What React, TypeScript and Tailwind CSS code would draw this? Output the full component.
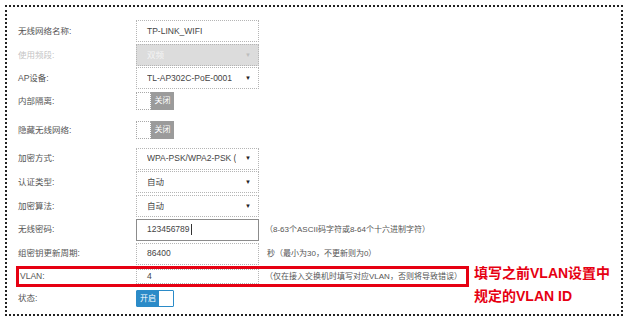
import React from 'react';

const labelCls = 'w-[118px] shrink-0 text-[8.5px] text-[#555]';
const boxCls =
  'w-[123px] h-[22px] shrink-0 border border-dotted border-[#b5b5b5] flex items-center pl-[10px] text-[8.5px] text-[#444]';
const hintCls = 'ml-[8px] text-[8px] text-[#555] whitespace-nowrap';

function Select({ value, disabled }: { value: string; disabled?: boolean }) {
  return (
    <div
      className={`${boxCls} justify-between pr-[7px] h-[21px] ${
        disabled ? 'bg-[#dcdcdc] text-[#f4f4f4]' : 'bg-white'
      }`}
    >
      <span className="truncate">{value}</span>
      <span className={`text-[6px] ${disabled ? 'text-[#bdbdbd]' : 'text-[#222]'}`}>▼</span>
    </div>
  );
}

function ToggleOff() {
  return (
    <div className="flex h-[18px] w-[38px]">
      <div className="w-[15px] h-full border border-dotted border-[#a8a8a8] bg-white" />
      <div className="flex-1 bg-[#9b9b9b] flex items-center justify-center text-[8px] text-white">
        关闭
      </div>
    </div>
  );
}

function ToggleOn() {
  return (
    <div className="flex h-[17px] w-[38px] border border-[#2b8bc8] rounded-[1px]">
      <div className="w-[22px] bg-[#2b8bc8] flex items-center justify-center text-[8px] text-white">
        开启
      </div>
      <div className="flex-1 bg-white" />
    </div>
  );
}

export default function App() {
  return (
    <div className="relative w-[632px] h-[321px] bg-white font-['Liberation_Sans','Noto_Sans_CJK_SC',sans-serif] overflow-hidden">
      <div className="ml-[5px] mt-[5px] w-[618px] h-[311px] border-2 border-dotted border-[#222] pt-[12px] pl-[11px]">
        {/* wireless name */}
        <div className="flex items-center h-[24px]">
          <span className={labelCls}>无线网络名称:</span>
          <div className={boxCls}>TP-LINK_WIFI</div>
        </div>
        <div className="flex items-center h-[24px]">
          <span className={`${labelCls} !text-[#c4c4c4]`}>使用频段:</span>
          <Select value="双频" disabled />
        </div>
        <div className="flex items-center h-[22px]">
          <span className={labelCls}>AP设备:</span>
          <Select value="TL-AP302C-PoE-0001" />
        </div>
        <div className="flex items-center h-[24px]">
          <span className={labelCls}>内部隔离:</span>
          <ToggleOff />
        </div>
        <div className="flex items-center h-[34px]">
          <span className={labelCls}>隐藏无线网络:</span>
          <ToggleOff />
        </div>

        {/* security */}
        <div className="flex items-center h-[23px]">
          <span className={labelCls}>加密方式:</span>
          <Select value="WPA-PSK/WPA2-PSK (" />
        </div>
        <div className="flex items-center h-[24px]">
          <span className={labelCls}>认证类型:</span>
          <Select value="自动" />
        </div>
        <div className="flex items-center h-[24px]">
          <span className={labelCls}>加密算法:</span>
          <Select value="自动" />
        </div>
        <div className="flex items-center h-[23px]">
          <span className={labelCls}>无线密码:</span>
          <div className={`${boxCls} !border-solid !border-[#8c8c8c]`}>
            123456789
            <span className="inline-block w-px h-[11px] bg-[#333] ml-px" />
          </div>
          <span className={`${hintCls} !ml-[6px]`}>（8-63个ASCII码字符或8-64个十六进制字符）</span>
        </div>
        <div className="flex items-center h-[25px]">
          <span className={labelCls}>组密钥更新周期:</span>
          <div className={boxCls}>86400</div>
          <span className={hintCls}>秒（最小为30，不更新则为0）</span>
        </div>

        {/* vlan, outlined in red */}
        <div className="flex items-center h-[21px] w-[453px] -ml-[2px] border-[3px] border-[#e60012]">
          <span className="w-[117px] shrink-0 pl-px text-[8.5px] text-[#555]">VLAN:</span>
          <div className={`${boxCls} !h-[15px]`}>4</div>
          <span className={`${hintCls} !ml-[6px]`}>（仅在接入交换机时填写对应VLAN，否则将导致错误）</span>
        </div>

        <div className="flex items-center h-[23px]">
          <span className={labelCls}>状态:</span>
          <ToggleOn />
        </div>
      </div>

      {/* red annotation */}
      <div className="absolute left-[474px] top-[262px] text-[14px] leading-[23px] font-bold text-[#e60012]">
        <div>填写之前VLAN设置中</div>
        <div>规定的VLAN ID</div>
      </div>
    </div>
  );
}
